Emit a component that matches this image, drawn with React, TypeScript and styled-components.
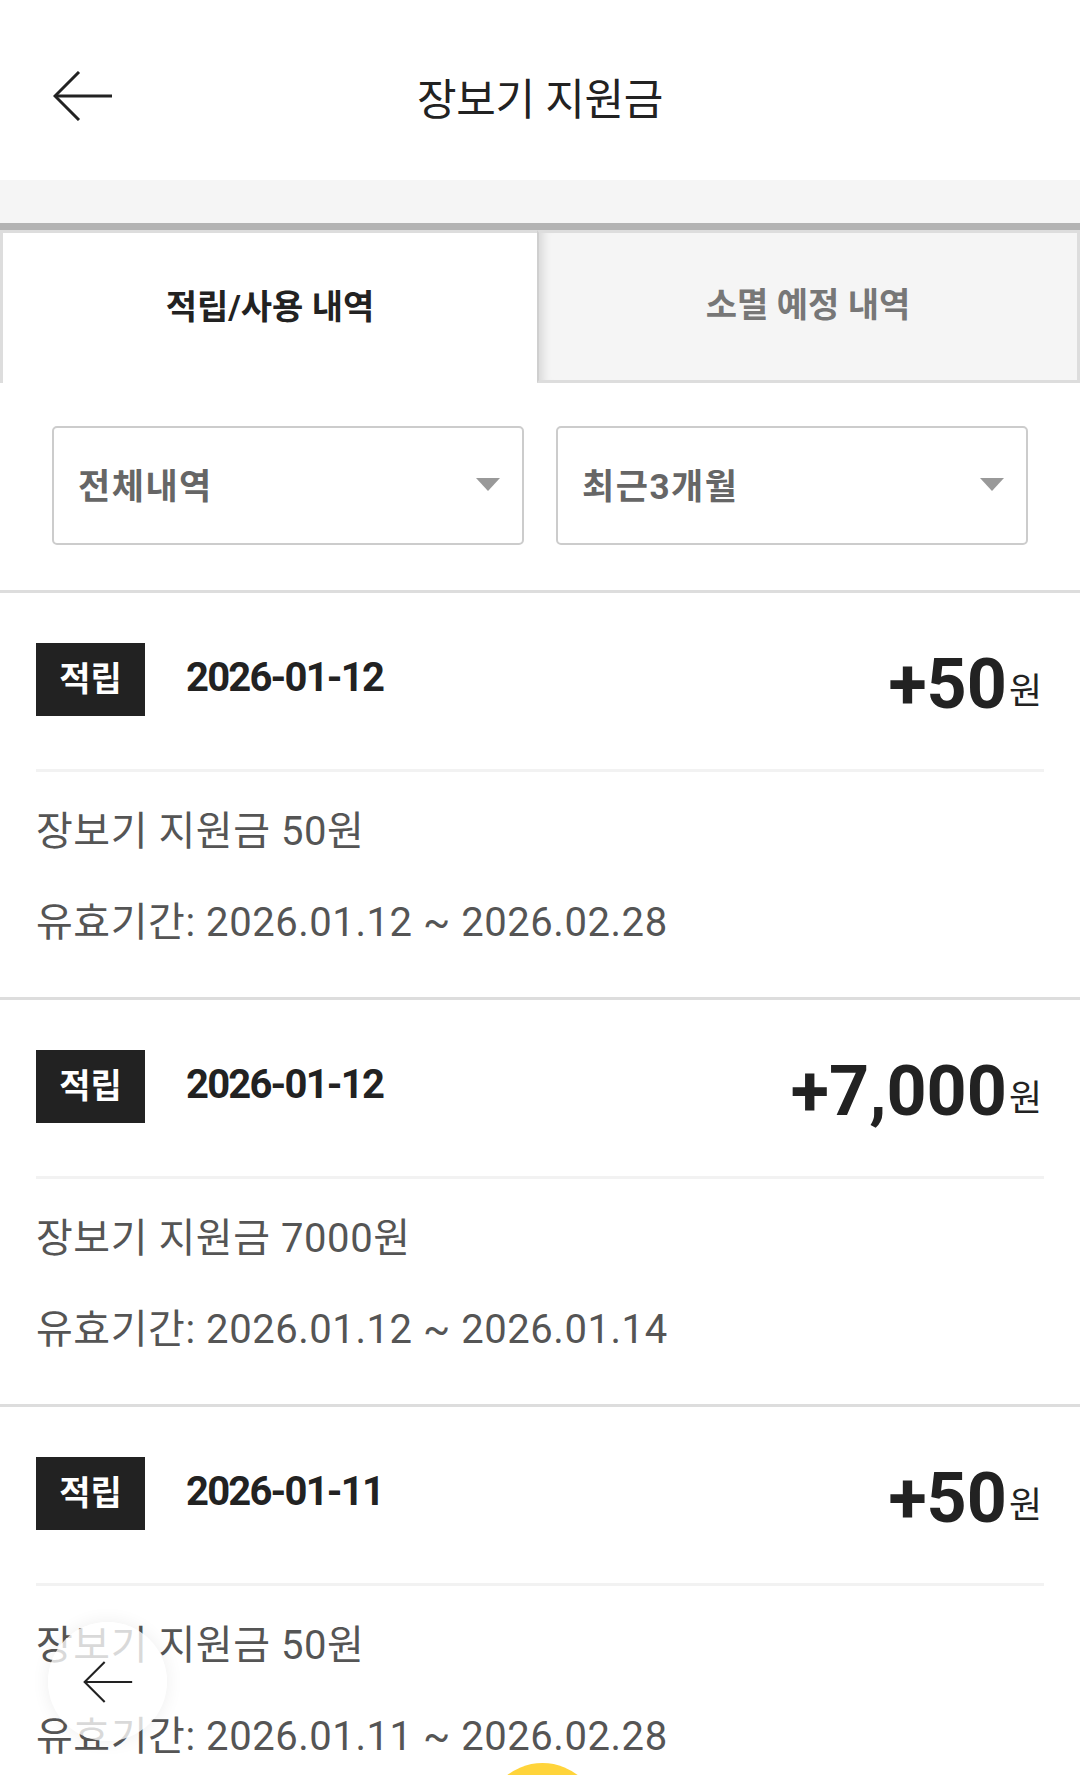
import React from "react";
import styled, { createGlobalStyle } from "styled-components";

const GlobalStyle = createGlobalStyle`
  html, body { margin: 0; padding: 0; background: #ffffff; }
  body { font-family: Roboto, "Noto Sans CJK KR", "Noto Sans", sans-serif; }
  * { box-sizing: border-box; }
`;

const Page = styled.div`
  position: relative;
  width: 1080px;
  height: 1775px;
  overflow: hidden;
  background: #ffffff;
`;

const Header = styled.header`
  display: grid;
  grid-template-columns: 1fr auto 1fr;
  align-items: center;
  height: 180px;
  padding-top: 12px;
`;

const BackButton = styled.button`
  justify-self: start;
  margin-left: 53px;
  padding: 0;
  border: 0;
  background: transparent;
  display: flex;
  color: #222222;
`;

const Title = styled.h1`
  margin: 0;
  font-size: 43px;
  font-weight: 400;
  letter-spacing: -0.3px;
  color: #222222;
`;

const Band = styled.div`
  height: 50px;
  background: #f5f5f5;
  border-bottom: 7px solid #b3b3b3;
`;

const Tabs = styled.div`
  display: grid;
  grid-template-columns: 537px 1fr;
  height: 153px;
`;

const Tab = styled.div<{ $active?: boolean }>`
  display: flex;
  align-items: center;
  justify-content: center;
  border-top: 3px solid #dddddd;
  font-size: 34px;
  font-weight: 700;
  letter-spacing: 0px;
  color: ${(p) => (p.$active ? "#222222" : "#777777")};
  background: ${(p) => (p.$active ? "#ffffff" : "#f5f5f5")};
  border-left: ${(p) => (p.$active ? "3px solid #dddddd" : "2px solid #cfcfcf")};
  border-bottom: ${(p) => (p.$active ? "0" : "3px solid #dddddd")};
  border-right: ${(p) => (p.$active ? "0" : "3px solid #dddddd")};
  box-shadow: ${(p) => (p.$active ? "none" : "inset 12px 0 10px -8px rgba(0,0,0,0.12)")};
  padding-bottom: 8px;
`;

const Filters = styled.div`
  display: grid;
  grid-template-columns: 1fr 1fr;
  gap: 32px;
  padding: 43px 52px 45px;
  border-bottom: 3px solid #dddddd;
`;

const Select = styled.div`
  display: flex;
  align-items: center;
  justify-content: space-between;
  height: 119px;
  padding: 0 22px 4px 24px;
  border: 2px solid #cccccc;
  border-radius: 5px;
  font-size: 35px;
  font-weight: 700;
  letter-spacing: 1.5px;
  color: #666666;
`;

const Caret = styled.span`
  width: 0;
  height: 0;
  border-left: 12px solid transparent;
  border-right: 12px solid transparent;
  border-top: 13px solid #999999;
  margin-top: 2px;
`;

const Item = styled.section`
  padding: 50px 36px 49px;
  border-bottom: 3px solid #dddddd;
`;

const TopRow = styled.div`
  display: flex;
  align-items: center;
  height: 73px;
`;

const Badge = styled.span`
  display: flex;
  align-items: center;
  justify-content: center;
  width: 109px;
  height: 73px;
  background: #222222;
  color: #ffffff;
  font-size: 34px;
  font-weight: 700;
  letter-spacing: 0px;
  padding-bottom: 6px;
`;

const DateText = styled.span`
  margin-left: 41px;
  font-size: 40px;
  font-weight: 700;
  letter-spacing: -1.8px;
  color: #222222;
  margin-top: -5px;
`;

const Amount = styled.span`
  margin-left: auto;
  display: flex;
  align-items: baseline;
  color: #222222;
  margin-top: 8px;
  margin-right: 2px;
`;

const AmountNum = styled.span`
  font-size: 70px;
  font-weight: 700;
  letter-spacing: 0px;
`;

const Won = styled.span`
  font-size: 36px;
  font-weight: 400;
  margin-left: 2px;
  letter-spacing: 0px;
  position: relative;
  top: -4px;
`;

const Divider = styled.div`
  height: 3px;
  margin-top: 53px;
  background: #f2f2f2;
`;

const Line = styled.p<{ $gap: number }>`
  margin: ${(p) => p.$gap}px 0 0;
  height: 50px;
  line-height: 50px;
  font-size: 40px;
  font-weight: 400;
  letter-spacing: 0.55px;
  color: #555555;
  white-space: nowrap;
`;

const FloatBack = styled.button`
  position: absolute;
  left: 48px;
  top: 1622px;
  width: 119px;
  height: 119px;
  border-radius: 50%;
  border: 0;
  padding: 0;
  display: flex;
  align-items: center;
  justify-content: center;
  background: rgba(255, 255, 255, 0.78);
  box-shadow: 0 0 18px rgba(0, 0, 0, 0.07);
  color: #222222;
`;

const YellowDot = styled.div`
  position: absolute;
  left: 485px;
  top: 1763px;
  width: 115px;
  height: 115px;
  border-radius: 50%;
  background: #ffd43b;
`;

const ArrowIcon = ({ w, h, sw }: { w: number; h: number; sw: number }) => (
  <svg width={w} height={h} viewBox="0 0 60 50" fill="none" stroke="currentColor" strokeWidth={sw} strokeLinecap="butt" strokeLinejoin="miter">
    <path d="M2 25 H59" />
    <path d="M26 1 L2 25 L26 49" />
  </svg>
);

type Entry = {
  date: string;
  amount: string;
  desc: string;
  period: string;
};

const entries: Entry[] = [
  { date: "2026-01-12", amount: "+50", desc: "장보기 지원금 50원", period: "유효기간: 2026.01.12 ~ 2026.02.28" },
  { date: "2026-01-12", amount: "+7,000", desc: "장보기 지원금 7000원", period: "유효기간: 2026.01.12 ~ 2026.01.14" },
  { date: "2026-01-11", amount: "+50", desc: "장보기 지원금 50원", period: "유효기간: 2026.01.11 ~ 2026.02.28" },
];

export default function App() {
  return (
    <Page>
      <GlobalStyle />
      <Header>
        <BackButton aria-label="뒤로">
          <ArrowIcon w={60} h={50} sw={3} />
        </BackButton>
        <Title>장보기 지원금</Title>
        <span />
      </Header>
      <Band />
      <Tabs>
        <Tab $active>적립/사용 내역</Tab>
        <Tab>소멸 예정 내역</Tab>
      </Tabs>
      <Filters>
        <Select>
          <span>전체내역</span>
          <Caret />
        </Select>
        <Select>
          <span>최근3개월</span>
          <Caret />
        </Select>
      </Filters>
      {entries.map((e, i) => (
        <Item key={i}>
          <TopRow>
            <Badge>적립</Badge>
            <DateText>{e.date}</DateText>
            <Amount>
              <AmountNum>{e.amount}</AmountNum>
              <Won>원</Won>
            </Amount>
          </TopRow>
          <Divider />
          <Line $gap={35}>{e.desc}</Line>
          <Line $gap={41}>{e.period}</Line>
        </Item>
      ))}
      <FloatBack aria-label="뒤로">
        <ArrowIcon w={50} h={42} sw={2.5} />
      </FloatBack>
      <YellowDot />
    </Page>
  );
}
